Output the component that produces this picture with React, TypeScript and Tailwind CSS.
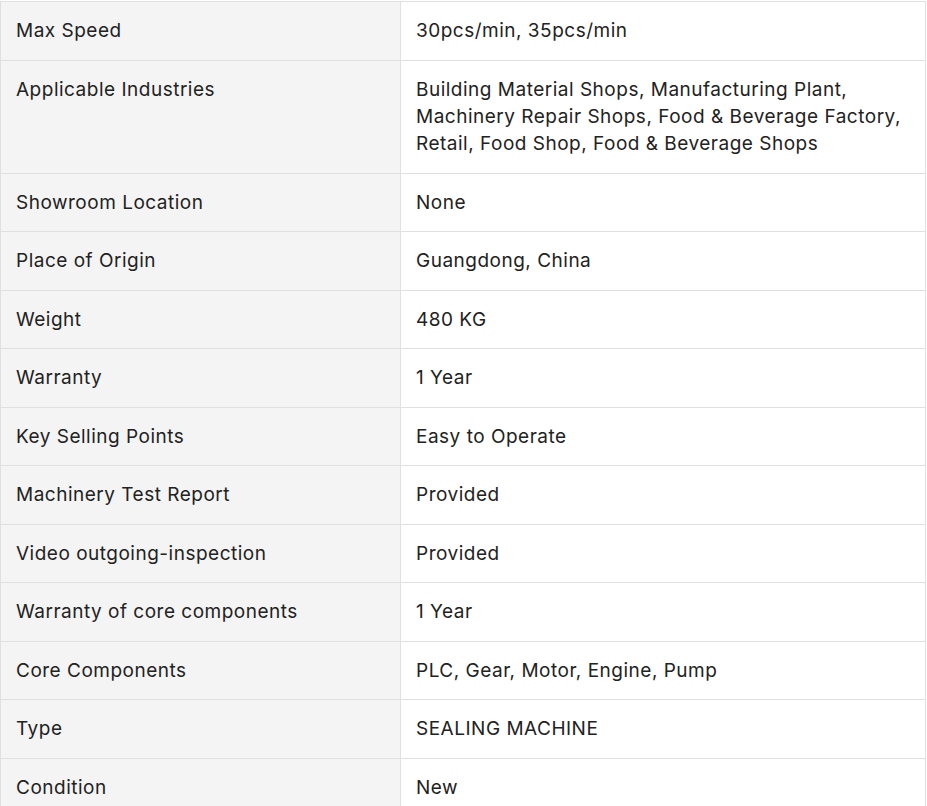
const rows: [string, string][] = [
  ["Max Speed", "30pcs/min, 35pcs/min"],
  [
    "Applicable Industries",
    "Building Material Shops, Manufacturing Plant, Machinery Repair Shops, Food & Beverage Factory, Retail, Food Shop, Food & Beverage Shops",
  ],
  ["Showroom Location", "None"],
  ["Place of Origin", "Guangdong, China"],
  ["Weight", "480 KG"],
  ["Warranty", "1 Year"],
  ["Key Selling Points", "Easy to Operate"],
  ["Machinery Test Report", "Provided"],
  ["Video outgoing-inspection", "Provided"],
  ["Warranty of core components", "1 Year"],
  ["Core Components", "PLC, Gear, Motor, Engine, Pump"],
  ["Type", "SEALING MACHINE"],
  ["Condition", "New"],
];

export default function App() {
  return (
    <div className="bg-white pt-px font-['Inter',sans-serif] text-[19px] leading-[27.25px] tracking-[0.5px] text-[#222222]">
      <table className="w-[926px] border-collapse table-fixed">
        <tbody>
          {rows.map(([label, value]) => (
            <tr key={label}>
              <td className="w-[400px] border border-[#e0e0e0] bg-[#f4f4f4] px-[15px] py-[15.15px] align-top">
                {label}
              </td>
              <td className="border border-[#e0e0e0] px-[15px] py-[15.15px] align-top">
                {value}
              </td>
            </tr>
          ))}
        </tbody>
      </table>
    </div>
  );
}
